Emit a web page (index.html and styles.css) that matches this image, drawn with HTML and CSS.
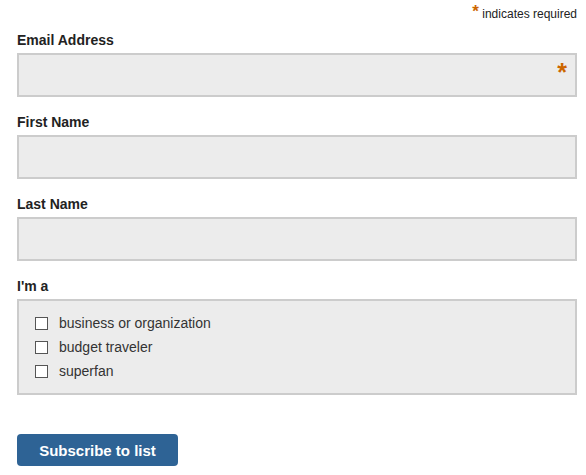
FILE: index.html
```html
<!DOCTYPE html>
<html lang="en">
<head>
	<meta charset="utf-8">
	<title>Subscribe</title>
	<link rel="stylesheet" href="styles.css">
</head>
<body>
	<form class="signup">
		<div class="indicates-required"><span class="asterisk">*</span> indicates required</div>

		<div class="field-group">
			<label for="mce-email">Email Address</label>
			<div class="input-wrap">
				<input type="email" id="mce-email" class="required">
				<span class="asterisk">*</span>
			</div>
		</div>

		<div class="field-group">
			<label for="mce-fname">First Name</label>
			<input type="text" id="mce-fname">
		</div>

		<div class="field-group">
			<label for="mce-lname">Last Name</label>
			<input type="text" id="mce-lname">
		</div>

		<div class="field-group">
			<label class="group-label">I'm a</label>
			<ul class="checks">
				<li><input type="checkbox" id="grp-1"><label for="grp-1">business or organization</label></li>
				<li><input type="checkbox" id="grp-2"><label for="grp-2">budget traveler</label></li>
				<li><input type="checkbox" id="grp-4"><label for="grp-4">superfan</label></li>
			</ul>
		</div>

		<button type="button" class="button">Subscribe to list</button>
	</form>
</body>
</html>
```

FILE: styles.css
```css
html,
body {
	margin: 0;
	padding: 0;
	background: #fff;
}

.signup {
	padding: 0 9px 0 17px;
	font-family: "Liberation Sans", Arial, sans-serif;
	color: #333;
}

.indicates-required {
	text-align: right;
	font-size: 12px;
	line-height: 14px;
	padding-top: 5px;
	height: 31px;
	box-sizing: border-box;
	color: #222;
}

.indicates-required .asterisk {
	font-size: 17px;
	font-weight: bold;
	vertical-align: 1px;
}

.asterisk { color: #c60; }

.field-group { margin-bottom: 16px; }

.field-group > label {
	display: block;
	font-weight: bold;
	font-size: 14px;
	line-height: 18px;
	margin-bottom: 4px;
	color: #222;
}

.field-group input[type=text],
.field-group input[type=email] {
	display: block;
	width: 100%;
	height: 44px;
	box-sizing: border-box;
	margin: 0;
	border: 2px solid #ccc;
	background: #ececec;
	font: 14px "Liberation Sans", Arial, sans-serif;
	padding: 0 10px;
}

.input-wrap { position: relative; }

.input-wrap .asterisk {
	position: absolute;
	right: 10px;
	top: 7px;
	font-size: 25px;
	font-weight: bold;
	line-height: 24px;
}

.checks {
	list-style: none;
	margin: 0;
	padding: 10px 12px;
	border: 2px solid #ccc;
	background: #ececec;
	font-size: 14px;
	line-height: 24px;
}

.checks li {
	display: flex;
	align-items: center;
	height: 24px;
}

.checks input {
	appearance: none;
	width: 13px;
	height: 13px;
	margin: 0 11px 0 4px;
	border: 1px solid #555;
	background: #fff;
	box-sizing: border-box;
}

.button {
	margin-top: 23px;
	width: 161px;
	height: 32px;
	border: 0;
	border-radius: 4px;
	background: #2e6395;
	color: #fff;
	font: bold 15px "Liberation Sans", Arial, sans-serif;
	padding: 0;
}
```
